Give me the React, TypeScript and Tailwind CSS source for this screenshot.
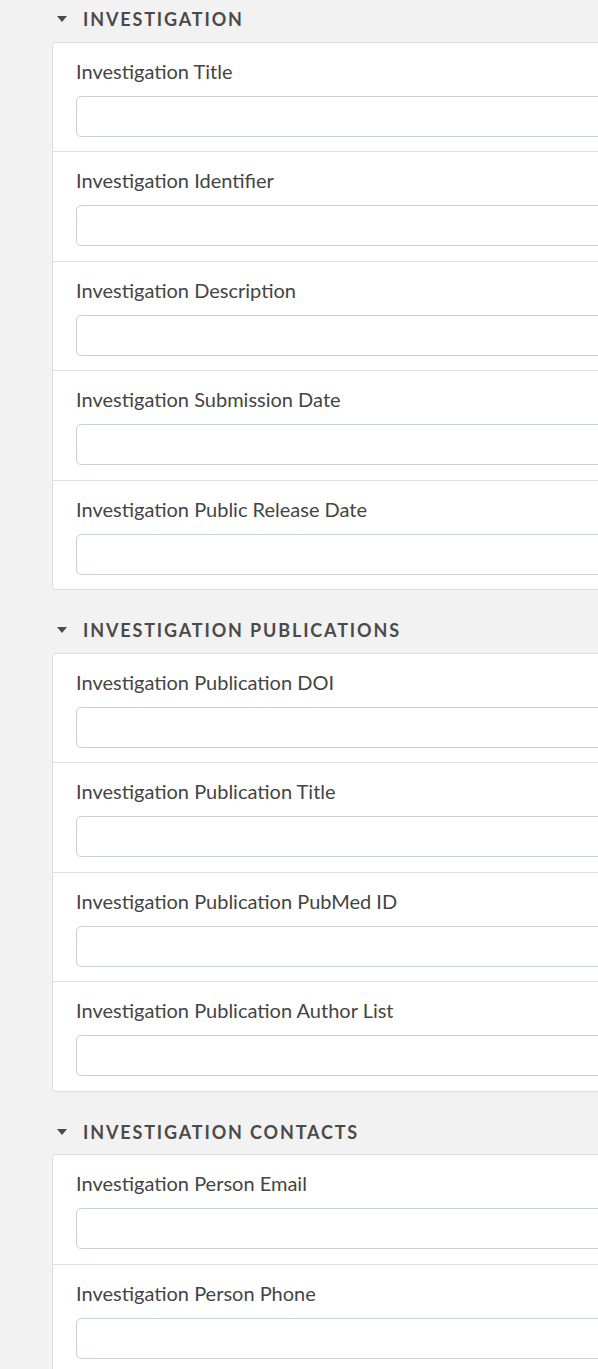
const sections = [
  {
    title: 'Investigation',
    fields: [
      'Investigation Title',
      'Investigation Identifier',
      'Investigation Description',
      'Investigation Submission Date',
      'Investigation Public Release Date',
    ],
  },
  {
    title: 'Investigation Publications',
    fields: [
      'Investigation Publication DOI',
      'Investigation Publication Title',
      'Investigation Publication PubMed ID',
      'Investigation Publication Author List',
    ],
  },
  {
    title: 'Investigation Contacts',
    fields: ['Investigation Person Email', 'Investigation Person Phone'],
  },
]

function Caret() {
  return (
    <svg width="10" height="6" viewBox="0 0 10 6" className="shrink-0">
      <path d="M0 0 H10 L5 6 Z" fill="#4a4a4a" />
    </svg>
  )
}

export default function App() {
  return (
    <div className="w-[598px] min-h-[1369px] overflow-hidden bg-[#f2f2f2] text-[#444] font-['Lato','Liberation_Sans',sans-serif]">
      {sections.map((s, si) => (
        <div key={s.title} className={si === 0 ? 'pt-[9px]' : 'pt-[30px]'}>
          <div className="flex items-center gap-[16px] pl-[57px] h-[20px] mb-[12.5px]">
            <Caret />
            <h3 className="text-[18px] font-bold uppercase tracking-[1.85px] leading-[20px] text-[#4a4a4a]">{s.title}</h3>
          </div>
          <div className="ml-[52px] w-[600px] bg-white border border-[#dcdcdc] rounded-[4px]">
            {s.fields.map((f, i) => (
              <div key={f} className={`pl-[23px] pt-[18px] pb-[14.5px] ${i > 0 ? 'border-t border-[#e2e2e2]' : ''}`}>
                <label className="block text-[20px] leading-[20px] text-[#444] mb-[15px]">{f}</label>
                <input className="block w-full h-[41px] border-[1.5px] border-[#cacfd3] rounded-[5px] bg-white outline-none" />
              </div>
            ))}
          </div>
        </div>
      ))}
    </div>
  )
}
